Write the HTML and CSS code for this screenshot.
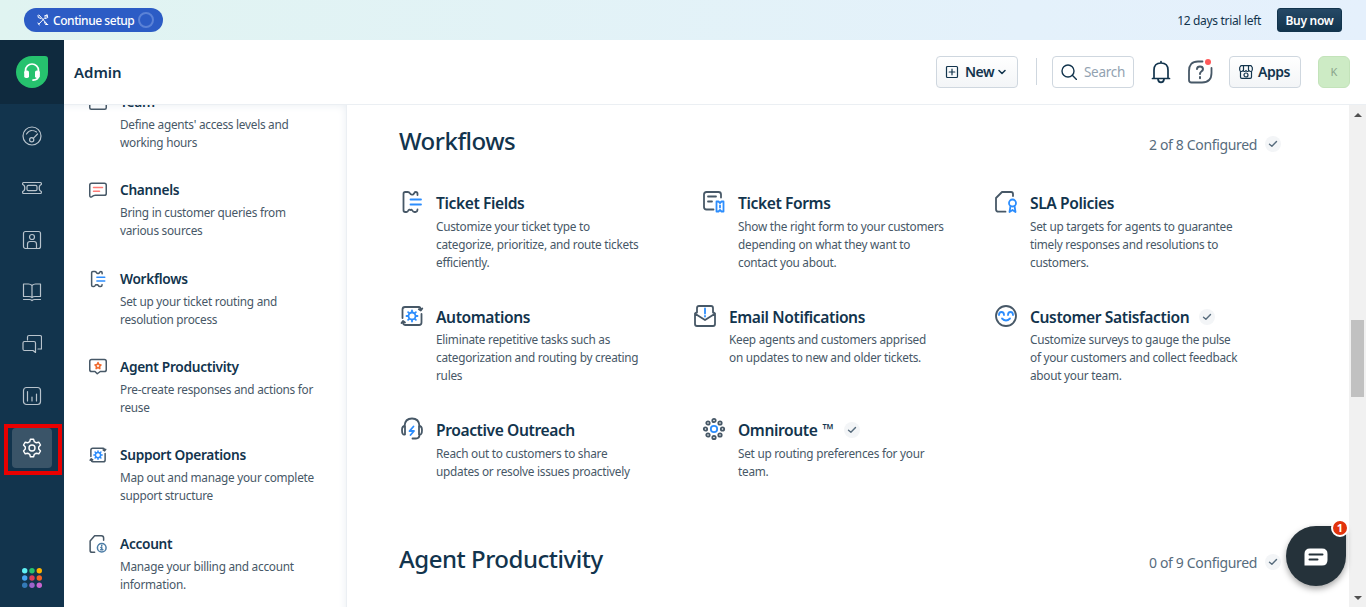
FILE: index.html
```html
<!DOCTYPE html>
<html lang="en">
<head>
<meta charset="utf-8">
<title>Admin</title>
<link rel="stylesheet" href="styles.css">
</head>
<body>
<svg class="sprite" aria-hidden="true">
  <symbol id="fields" viewBox="0 0 24 24"><path d="M17.500 5V3.600Q17.500 2 15.800 2Q14.400 2 14 3.600Q13.200 5 11.800 4.600Q10.600 4.600 10 3.400Q9.200 2 7.800 2H5.200Q3.500 2 3.500 3.700V20.300Q3.500 22 5.200 22H6.500Q7.800 22 8.300 20.500Q9.200 19 10.500 20Q11.300 19 12.400 20.500Q13 22 14.500 22H15.500Q17.300 22 17.500 19.500"/><path class="blue" d="M10.500 9.500H21M10.500 14.500H21"/></symbol>
  <symbol id="auto" viewBox="0 0 24 24"><path d="M2.500 14V5.500Q2.500 3 5 3H19Q20.300 3 20.800 5.500M21.500 10V18.500Q21.500 21 19 21H5Q3.300 21 3 18.500M18.800 5.300L20.800 6.500L22.300 4.500M1.500 19L3 17L5 18.500"/><circle class="blue" cx="12" cy="12" r="3.500"/><path class="blue" d="M12 6.500V8M12 16V17.500M6.500 12H8M16 12H17.500M8.100 8.100L9.200 9.200M14.800 14.800L15.900 15.900M8.100 15.900L9.200 14.800M14.800 9.200L15.900 8.100"/></symbol>
  <symbol id="tick" viewBox="0 0 16 16"><path d="M4.500 8.300L6.900 10.300L11.500 5.500"/></symbol>
</svg>

<div class="banner">
  <button class="setup">
    <svg class="tools" viewBox="0 0 12 12"><path d="M2 1L10 10M4 4.500L1.300 3.500L1 1.500M10 1.500L2 10M7.500 2L10 1M10 1L10.800 3.500L8.500 4.500M7.500 8L8.500 10.500L10.800 10.500M1 9L2.300 11"/></svg>
    <span class="setup-text">Continue setup</span><i class="ring"></i>
  </button>
  <span class="trial">12 days trial left</span>
  <button class="buy"><span>Buy now</span></button>
</div>

<div class="shell">
  <nav class="rail">
    <div class="brand"><div class="drop"><svg viewBox="0 0 32 32"><path d="M9.500 17V14.500A6.500 6.500 0 0 1 22.500 14.500V19Q22.500 24 17 24.200" fill="none" stroke="#fff" stroke-width="1.700"/><rect x="8.200" y="14.500" width="4.800" height="7.500" rx="1.800" fill="#fff"/><rect x="19" y="14.500" width="4.800" height="7.500" rx="1.800" fill="#fff"/></svg></div></div>
    <div class="links">
      <a><svg viewBox="0 0 20 20"><circle cx="10" cy="10" r="9"/><path d="M4.500 8Q7 4.300 10 4.500Q12.500 4.500 14.500 6M15.500 8L11.300 12.300"/><circle cx="9.700" cy="13.700" r="2.100"/></svg></a>
      <a><svg viewBox="0 0 20 20"><path d="M1.500 4.500H18.500Q19.500 4.500 19.400 6.500Q17.200 7 17.200 10T19.400 13.500Q19.500 15.500 18.500 15.500H1.500Q.500 15.500.600 13.500Q2.800 13 2.800 10T.600 6.500Q.500 4.500 1.500 4.500Z"/><rect x="5" y="7.300" width="10" height="5.400" rx="1.500"/></svg></a>
      <a><svg viewBox="0 0 20 20"><rect x="1.500" y="1.500" width="17" height="17" rx="2"/><circle cx="10" cy="7" r="2.500"/><path d="M5.500 18V14Q5.500 11.500 8 11.500H12Q14.500 11.500 14.500 14V18"/></svg></a>
      <a><svg viewBox="0 0 20 20"><path d="M10 3.500Q8.500 2 6.500 2H1.500V14.500H7Q9 14.500 10 15.500Q11 14.500 13 14.500H18.500V2H13.500Q11.500 2 10 3.500V15M1.500 17.500H7.500Q9 17.500 10 18.500Q11 17.500 12.500 17.500H18.500"/></svg></a>
      <a><svg viewBox="0 0 20 20"><path d="M5.500 6V3Q5.500 1.500 7 1.500H18Q19.500 1.500 19.500 3V15H16M2.500 7.500H12Q13.500 7.500 13.500 9V18.500L11 16.500H2.500Q1 16.500 1 15V9Q1 7.500 2.500 7.500Z"/></svg></a>
      <a><svg viewBox="0 0 20 20"><rect x="1.500" y="1.500" width="17" height="17" rx="3"/><path d="M5.500 5.500V15M10 11V15M14.500 8V15"/></svg></a>
      <a class="active"><svg viewBox="0 0 20 20"><path d="M7.700 3.700L8.400 1.200H11.600L12.300 3.700L14.300 4.800L16.800 4.200L18.500 7L16.700 8.900V11.100L18.500 13L16.800 15.800L14.300 15.200L12.300 16.300L11.600 18.800H8.400L7.700 16.300L5.700 15.200L3.200 15.800L1.500 13L3.300 11.100V8.900L1.500 7L3.200 4.200L5.700 4.800Z"/><circle cx="10" cy="10" r="3"/></svg><i class="mark"></i></a>
    </div>
    <svg class="dots" viewBox="0 0 20 20"><circle cx="2.700" cy="2.700" r="2.700" fill="#5ff0f5"/><circle cx="10" cy="2.700" r="2.700" fill="#26c26e"/><circle cx="17.300" cy="2.700" r="2.700" fill="#ffb300"/><circle cx="2.700" cy="10" r="2.700" fill="#47a5f2"/><circle cx="10" cy="10" r="2.700" fill="#de3d5a"/><circle cx="17.300" cy="10" r="2.700" fill="#f56325"/><circle cx="2.700" cy="17.300" r="2.700" fill="#337ab8"/><circle cx="10" cy="17.300" r="2.700" fill="#9d63cb"/><circle cx="17.300" cy="17.300" r="2.700" fill="#c965cf"/></svg>
  </nav>

  <div class="page">
    <header class="top">
      <h1>Admin</h1>
      <button class="btn new"><svg viewBox="0 0 14 14" class="i14"><rect x="1.500" y="1.500" width="11" height="11" rx="1"/><path d="M7 4.200V9.800M4.200 7H9.800"/></svg><span>New</span><svg viewBox="0 0 8 8" class="caret"><path d="M1 2.500L4 5.500L7 2.500"/></svg></button>
      <i class="divider"></i>
      <div class="search"><svg viewBox="0 0 16 16" class="i16"><circle cx="7" cy="7" r="6"/><path d="M11.300 11.300L15.500 15.500"/></svg><span>Search</span></div>
      <svg class="bell" viewBox="0 0 24 24"><path d="M3.500 18.500H20.500M5 18V10Q5 3 12 3T19 10V18M12 3V1.500M9 19.500Q9.500 22.300 12 22.300T15 19.500"/></svg>
      <div class="help"><svg viewBox="0 0 26 24"><path d="M15.500 1.500H11Q2 1.500 2 11V20Q2 22.500 4.500 22.500H15Q24.500 22.500 24.500 13V8"/><path d="M10 9Q10.200 6.500 13 6.500T16 9Q16 10.500 14.300 11.500Q13 12.300 13 14M13 17V18.200" stroke-width="2"/></svg><i></i></div>
      <button class="btn apps"><svg viewBox="0 0 14 14" class="i14"><path d="M2 .700H12L13.300 2.500V5Q13 6.500 11.800 6.500T10 5.500Q9.500 6.500 8.500 6.500T7 5.500Q6.500 6.500 5.500 6.500T4 5.500Q3.500 6.500 2.200 6.500T.700 5V2.500ZM1.500 6.500V12Q1.500 13.300 2.800 13.300H11.200Q12.500 13.300 12.500 12V6.500M4.500 1V5.500M9.500 1V5.500"/><circle cx="7" cy="10" r="2"/></svg><span>Apps</span></button>
      <div class="avatar">K</div>
    </header>

    <div class="body">
      <aside class="side">
        <div class="entry"><svg viewBox="0 0 24 24"><rect x="1" y="2" width="22" height="19.500" rx="2"/></svg><div><h3>Team</h3><p>Define agents' access levels and<br>working hours</p></div></div>
        <div class="entry"><svg viewBox="0 0 24 24"><path d="M3.500 3H20.500Q23 3 23 5.500V16.500Q23 19 20.500 19H8.500Q6 19 4 20.800Q1 22.500 1 19V5.500Q1 3 3.500 3Z"/><path class="coral" d="M6 8.500H18M6 13.500H14"/></svg><div><h3>Channels</h3><p>Bring in customer queries from<br>various sources</p></div></div>
        <div class="entry"><svg><use href="#fields"/></svg><div><h3>Workflows</h3><p>Set up your ticket routing and<br>resolution process</p></div></div>
        <div class="entry"><svg viewBox="0 0 24 24"><path d="M3.500 2H20.500Q23 2 23 4.500V15.500Q23 18 20.500 18H15L11 21L8 18H3.500Q1 18 1 15.500V4.500Q1 2 3.500 2Z"/><path class="orange" d="M12 6L13.300 8.800L16 9.200L14 11.300L14.500 14.200L12 12.800L9.500 14.200L10 11.300L8 9.200L10.700 8.800Z"/></svg><div><h3>Agent Productivity</h3><p>Pre-create responses and actions for<br>reuse</p></div></div>
        <div class="entry"><svg><use href="#auto"/></svg><div><h3>Support Operations</h3><p>Map out and manage your complete<br>support structure</p></div></div>
        <div class="entry"><svg viewBox="0 0 24 24"><path d="M7.500 23H4Q1.500 23 1.500 20.500V8L7.500 1H16.500Q19.500 1 19.500 4V7"/><g class="steel"><circle cx="17" cy="17" r="5.800"/><path d="M17 13.700V14.500M15.800 16.500H17V19.500M15.500 19.700H18.500"/></g></svg><div><h3>Account</h3><p>Manage your billing and account<br>information.</p></div></div>
      </aside>

      <main class="content">
        <div class="head"><h2>Workflows</h2><span class="count">2 of 8 Configured</span><svg class="tick"><use href="#tick"/></svg></div>
        <div class="cards">
          <div class="card"><svg><use href="#fields"/></svg><div><h4>Ticket Fields</h4><p>Customize your ticket type to<br>categorize, prioritize, and route tickets<br>efficiently.</p></div></div>
          <div class="card"><svg viewBox="0 0 24 24"><path d="M11.500 19.500H4.500Q2 19.500 2 17V4.500Q2 2 4.500 2H16.500Q19 2 19 4.500V7.500M6 6.500H14M6 11.500H10"/><path class="blue" d="M14.500 11.500H16.500L18 13L19.500 11.500H21.500V21.500H19.500L18 20L16.500 21.500H14.500ZM18 15.500V17.500"/></svg><div><h4>Ticket Forms</h4><p>Show the right form to your customers<br>depending on what they want to<br>contact you about.</p></div></div>
          <div class="card"><svg viewBox="0 0 24 24"><path d="M11.500 21.700H4.500Q2 21.700 2 19.200V8L8 2H17Q19 2 19 4V6"/><g class="blue"><circle cx="18.500" cy="13" r="3.500"/><path d="M16.500 16L15.500 22L18.500 20L21.500 22L20.500 16"/></g></svg><div><h4>SLA Policies</h4><p>Set up targets for agents to guarantee<br>timely responses and resolutions to<br>customers.</p></div></div>
          <div class="card"><svg><use href="#auto"/></svg><div><h4>Automations</h4><p>Eliminate repetitive tasks such as<br>categorization and routing by creating<br>rules</p></div></div>
          <div class="card shift"><svg viewBox="0 0 24 24"><path d="M4 8.500V4Q4 2 6 2H18Q20 2 20 4V8.500M4 8L2 9.500V20Q2 22 4 22H20Q22 22 22 20V9.500L20 8M2.500 10L12 16L21.500 10"/><path class="blue" d="M12 4.500V9.500M12 12V12.500"/></svg><div><h4>Email Notifications</h4><p>Keep agents and customers apprised<br>on updates to new and older tickets.</p></div></div>
          <div class="card"><svg viewBox="0 0 24 24"><circle cx="12" cy="12" r="10"/><path class="blue" d="M5 11Q5 8 7.500 8T10 11M14 11Q14 8 16.500 8T19 11M8 14.500Q12 18.500 16 14.500"/></svg><div><h4>Customer Satisfaction<svg class="tick"><use href="#tick"/></svg></h4><p>Customize surveys to gauge the pulse<br>of your customers and collect feedback<br>about your team.</p></div></div>
          <div class="card"><svg viewBox="0 0 24 24"><path d="M4.500 9Q5 1.500 12 1.500T19.500 9M5 9V17.500Q2 18.500 2 13Q2 9 5 9ZM19 9V17.500Q22 18.500 22 13Q22 9 19 9ZM19.500 17.500Q19.500 21.500 16 21.500H12.500"/><path class="blue" d="M13.500 9.500L9.500 14H14L10.500 18"/></svg><div><h4>Proactive Outreach</h4><p>Reach out to customers to share<br>updates or resolve issues proactively</p></div></div>
          <div class="card"><svg viewBox="0 0 24 24"><circle cx="12" cy="3.500" r="1.700"/><circle cx="12" cy="20.500" r="1.700"/><circle cx="3.500" cy="12" r="1.700"/><circle cx="20.500" cy="12" r="1.700"/><circle cx="6" cy="6" r="1.700"/><circle cx="18" cy="6" r="1.700"/><circle cx="6" cy="18" r="1.700"/><circle cx="18" cy="18" r="1.700"/><circle class="blue" cx="12" cy="12" r="3.200"/></svg><div><h4>Omniroute <span class="tm">™</span><svg class="tick"><use href="#tick"/></svg></h4><p>Set up routing preferences for your<br>team.</p></div></div>
        </div>
        <div class="head"><h2>Agent Productivity</h2><span class="count">0 of 9 Configured</span><svg class="tick"><use href="#tick"/></svg></div>
      </main>
      <div class="scroll"><i class="up"></i><i class="thumb"></i><i class="down"></i></div>
    </div>
  </div>
</div>
<div class="chat"><svg viewBox="0 0 24 18"><path d="M6 .500H18Q23.500.500 23.500 6V12Q23.500 17.500 18 17.500H.500V6Q.500.500 6 .500Z" fill="#fff"/><path d="M5.500 6.500H18.500M5.500 11.500H13.500" stroke="#25323a" stroke-width="2" stroke-linecap="round"/></svg><span>1</span></div>
</body>
</html>
```
FILE: styles.css
```css
* { box-sizing: border-box; }
body { margin: 0; height: 607px; overflow: hidden; font-family: "Noto Sans", "Open Sans", sans-serif; color: #12344d; background: #fff; }
h1, h2, h3, h4, p { margin: 0; font-weight: 500; }
button { font-family: inherit; border: 0; padding: 0; margin: 0; }
svg { fill: none; stroke: #475867; stroke-linecap: round; stroke-linejoin: round; flex: none; }
.sprite { display: none; }
.blue { stroke: #2c8dfd; }
.coral { stroke: #ff7b76; }
.orange { stroke: #f0692c; }
.steel { stroke: #4c7ca5; }

.banner { height: 40px; display: flex; align-items: center; padding: 0 24px; background: linear-gradient(90deg, #e0f4f1, #e4f1fb 75%, #e5f0fc); font-size: 12px; }
.setup { width: 139px; height: 24px; border-radius: 12px; background: #2c5cc5; color: #fff; display: flex; align-items: center; padding-left: 13px; font-size: 12px; font-weight: 500; white-space: nowrap; }
.tools { width: 12px; height: 12px; stroke: #fff; stroke-width: 1; margin-right: 4px; }
.setup-text { width: 85px; letter-spacing: -.45px; text-align: left; padding-top: 1px; }
.ring { width: 16px; height: 16px; border: 2px solid #5b82d6; border-radius: 50%; }
.trial { margin-left: auto; margin-right: 16px; letter-spacing: -.32px; }
.buy { width: 65px; height: 24px; border-radius: 3px; border: 1px solid #12344d; background: linear-gradient(#264966, #12344d); color: #fff; font-size: 12px; font-weight: 600; letter-spacing: -.3px; }

.shell { display: flex; height: 567px; }
.rail { width: 64px; background: #12344d; display: flex; flex-direction: column; align-items: center; }
.brand { width: 64px; height: 64px; background: #0f2a3e; padding: 16px; }
.drop { width: 32px; height: 32px; background: #26c26e; border-radius: 16px 3px 16px 16px; }
.drop svg { width: 32px; height: 32px; display: block; stroke: none; }
.links { padding-top: 12px; display: grid; gap: 12px; }
.links a { width: 40px; height: 40px; border-radius: 4px; display: grid; place-items: center; position: relative; }
.links svg { width: 20px; height: 20px; stroke: #b8c3cc; stroke-width: 1.200; }
.links .active { background: #3a5468; }
.links .active svg { stroke: #fff; stroke-width: 1.400; }
.mark { position: absolute; left: -8px; top: -4px; width: 58px; height: 51px; border: 4px solid #ea0000; }
.dots { width: 20px; height: 20px; margin-top: auto; margin-bottom: 19px; stroke: none; }

.page { flex: 1; min-width: 0; }
.top { height: 65px; border-bottom: 1px solid #ebeff3; display: flex; align-items: center; padding: 0 16px 1px 10px; }
h1 { font-size: 15px; font-weight: 600; letter-spacing: 0; margin-right: auto; }
.btn { height: 32px; border: 1px solid #cfd7df; border-radius: 4px; background: linear-gradient(#fff, #f3f5f7); color: #12344d; display: flex; align-items: center; font-size: 14px; font-weight: 600; letter-spacing: -.5px; }
.i14 { width: 14px; height: 14px; stroke: #12344d; stroke-width: 1.200; }
.new { width: 82px; padding-left: 8px; }
.new span { width: 33px; margin-left: 6px; text-align: left; }
.caret { width: 8px; height: 8px; stroke: #12344d; stroke-width: 1.500; }
.divider { width: 1px; height: 27px; background: #cfd7df; margin: 0 15px 0 18px; }
.search { width: 82px; height: 32px; border: 1px solid #cfd7df; border-radius: 4px; display: flex; align-items: center; padding-left: 8px; font-size: 13.500px; letter-spacing: -.3px; color: #92a2b1; }
.i16 { width: 16px; height: 16px; stroke: #12344d; stroke-width: 1.400; margin-right: 7px; }
.bell { width: 24px; height: 24px; stroke: #12344d; stroke-width: 1.700; margin-left: 15px; }
.help { width: 26px; height: 24px; margin-left: 14px; position: relative; }
.help svg { width: 26px; height: 24px; display: block; stroke-width: 1.800; }
.help i { position: absolute; left: 18px; top: -1px; width: 6px; height: 6px; border-radius: 50%; background: #ff5959; }
.apps { width: 72px; padding-left: 9px; margin-left: 16px; }
.apps span { margin-left: 5px; }
.avatar { width: 32px; height: 32px; margin-left: 17px; border-radius: 6px; background: #cdebc5; border: 1px solid #c3e3ba; display: grid; place-items: center; font-size: 11px; color: #8aa38c; }

.body { display: flex; height: 502px; overflow: hidden; }
.side { width: 283px; padding-left: 25px; border-right: 1px solid #ebeff3; box-shadow: inset -9px 9px 8px -9px #e8edf2; overflow: hidden; background: #fff; }
.entry { display: flex; height: 88.400px; }
.entry:first-child { margin-top: -13.100px; }
.entry > svg { width: 18px; height: 18px; margin: 1px 13px 0 0; stroke-width: 2; }
h3 { font-size: 13.700px; font-weight: 600; line-height: 20px; margin-bottom: 2.900px; letter-spacing: -.3px; }
p { font-size: 11.800px; line-height: 18px; font-weight: 400; color: #475867; white-space: nowrap; letter-spacing: -.26px; }
.content { flex: 1; padding: 20px 68px 0 52px; }
.head { display: flex; align-items: center; height: 30px; }
h2 { font-size: 24px; letter-spacing: -.480px; margin-right: auto; }
.count { font-size: 14px; color: #576c7d; letter-spacing: -.350px; margin-top: 8px; }
.tick { width: 16px; height: 16px; border-radius: 50%; background: #f3f5f7; stroke: #576c7d; stroke-width: 1.400; margin-left: 8px; }
.head .tick { margin-top: 8px; }
.cards { display: grid; grid-template-columns: 302px 292px 1fr; grid-auto-rows: 113.500px; margin: 35px 0 0 1px; height: 353px; }
.card { display: flex; }
.card.shift { margin-left: -9px; }
.card > svg { width: 24px; height: 24px; margin-right: 12px; stroke-width: 1.800; }
h4 { font-size: 15.600px; font-weight: 600; line-height: 20px; letter-spacing: -.4px; margin: 3px 0 3.700px; white-space: nowrap; display: flex; align-items: center; }
h4 .tick { margin-left: 10px; }
.tm { font-size: 15px; font-weight: 500; margin: -3px 0 0 5px; }
.scroll { width: 17px; background: #f1f1f1; display: flex; flex-direction: column; align-items: center; }
.up { border: 4px solid transparent; border-bottom-color: #505050; border-top: 0; margin-top: 8px; }
.thumb { width: 13px; height: 77px; background: #c1c1c1; margin-top: 203px; }
.down { border: 4px solid transparent; border-top-color: #505050; border-bottom: 0; margin: auto 0 7px; }
.chat { position: absolute; left: 1286px; top: 526px; width: 60px; height: 60px; border-radius: 30px 4px 30px 30px; background: #25323a; box-shadow: 0 3px 6px rgba(0,0,0,.35); display: grid; place-items: center; }
.chat svg { width: 24px; height: 18px; stroke: none; margin-top: 2px; }
.chat span { position: absolute; left: 45px; top: -7px; width: 18px; height: 18px; border-radius: 50%; border: 2px solid #fff; background: #e2330c; color: #fff; font-size: 11px; font-weight: 700; line-height: 14px; text-align: center; }
```
